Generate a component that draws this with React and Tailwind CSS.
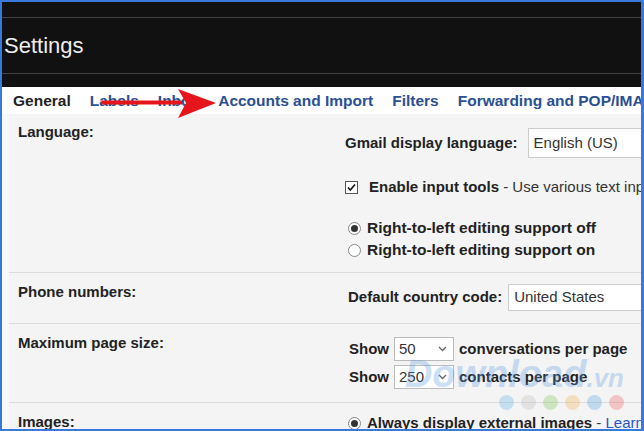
import React from "react";

const font = { fontFamily: '"Liberation Sans", Arial, sans-serif' };

function Checkbox() {
	return (
		<div className="w-[13px] h-[13px] border border-[#555] bg-white flex items-center justify-center">
			<svg width="11" height="11" viewBox="0 0 11 11">
				<path d="M2 5.5 L4.3 8 L9 2.5" fill="none" stroke="#111" strokeWidth="1.6" />
			</svg>
		</div>
	);
}

function Radio({ checked }) {
	return (
		<div className="w-[13px] h-[13px] rounded-full border border-[#888] bg-white flex items-center justify-center shrink-0">
			{checked && <div className="w-[7px] h-[7px] rounded-full bg-[#333]" />}
		</div>
	);
}

function SmallSelect({ value }) {
	return (
		<div className="w-[60px] h-[24px] border border-[#bbb] bg-white flex items-center justify-between pl-[4px] pr-[6px] font-normal text-[15px] text-[#333]">
			<span>{value}</span>
			<svg width="9" height="6" viewBox="0 0 9 6">
				<path d="M1 1 L4.5 4.5 L8 1" fill="none" stroke="#666" strokeWidth="1.3" />
			</svg>
		</div>
	);
}

export default function App() {
	const tabs = ["Labels", "Inbox", "Accounts and Import", "Filters", "Forwarding and POP/IMAP"];

	return (
		<div
			style={font}
			className="relative w-[644px] h-[431px] overflow-hidden border-t-2 border-l-2 border-b-2 border-r-[3px] border-[#3a78dc] bg-white text-[#222] text-[15px]">
			{/* dark header */}
			<div className="bg-[#111]">
				<div className="h-[16px] border-b border-[#444]" />
				<div className="h-[56px] border-b border-[#444] flex items-center pl-[2px]">
					<span className="text-[22px] text-[#eee]">Settings</span>
				</div>
				<div className="h-[13px]" />
			</div>

			{/* tabs */}
			<div className="h-[27px] bg-white flex items-center pl-[11px] gap-[19px] font-bold whitespace-nowrap text-[15.5px]">
				<span className="text-[#222]">General</span>
				{tabs.map((t) => (
					<span key={t} className="text-[#2a4f93]">
						{t}
					</span>
				))}
			</div>

			{/* content */}
			<div className="bg-[#f9f9f9] pl-[7px] font-bold">
				<div className="bg-[#f4f4f4]">
					{/* language */}
					<div className="grid grid-cols-[336px_1fr] h-[159px] border-b border-[#dcdcdc]">
						<div className="pl-[9px] pt-[7px]">Language:</div>
						<div className="pt-[14px] whitespace-nowrap">
							<div className="flex items-center gap-[10px] h-[30px]">
								<span>Gmail display language:</span>
								<div className="h-[30px] w-[200px] bg-white border border-[#ccc] flex items-center pl-[5px] font-normal text-[#333]">
									English (US)
								</div>
							</div>
							<div className="flex items-center gap-[11px] h-[14px] mt-[22px]">
								<Checkbox />
								<span>
									Enable input tools <span className="font-normal text-[#333]">- Use various text input tools</span>
								</span>
							</div>
							<div className="ml-[3px] mt-[23px] flex items-center gap-[6px] h-[22px] text-[15.5px]">
								<Radio checked />
								<span>Right-to-left editing support off</span>
							</div>
							<div className="ml-[3px] flex items-center gap-[6px] h-[22px] text-[15.5px]">
								<Radio />
								<span>Right-to-left editing support on</span>
							</div>
						</div>
					</div>

					{/* phone */}
					<div className="grid grid-cols-[336px_1fr] h-[51px] border-b border-[#dcdcdc]">
						<div className="pl-[9px] pt-[8px]">Phone numbers:</div>
						<div className="pt-[11px] pl-[3px] whitespace-nowrap">
							<div className="flex items-center gap-[6px] h-[27px]">
								<span>Default country code:</span>
								<div className="h-[27px] w-[200px] bg-white border border-[#ccc] flex items-center pl-[5px] font-normal text-[#333]">
									United States
								</div>
							</div>
						</div>
					</div>

					{/* page size */}
					<div className="grid grid-cols-[336px_1fr] h-[79px] border-b border-[#dcdcdc]">
						<div className="pl-[9px] pt-[8px]">Maximum page size:</div>
						<div className="pt-[13px] pl-[4px] whitespace-nowrap">
							<div className="flex items-center gap-[5px] h-[24px]">
								<span>Show</span>
								<SmallSelect value="50" />
								<span>conversations per page</span>
							</div>
							<div className="flex items-center gap-[5px] h-[24px] mt-[4px]">
								<span>Show</span>
								<SmallSelect value="250" />
								<span>contacts per page</span>
							</div>
						</div>
					</div>

					{/* images */}
					<div className="grid grid-cols-[336px_1fr] h-[40px]">
						<div className="pl-[9px] pt-[8px]">Images:</div>
						<div className="pt-[12px] pl-[3px] whitespace-nowrap">
							<div className="flex items-center gap-[6px] h-[16px]">
								<Radio checked />
								<span>
									Always display external images{" "}
									<span className="font-normal text-[#333]">
										- <span className="text-[#2255cc]">Learn more</span>
									</span>
								</span>
							</div>
						</div>
					</div>
				</div>
			</div>

			{/* red arrow annotation */}
			<svg className="absolute left-[98px] top-[85px]" width="122" height="34" viewBox="0 0 122 34">
				<rect x="2" y="13.5" width="80" height="4" fill="#e8141c" />
				<path d="M78 2 L116 16 L78 31 L86 16 Z" fill="#e8141c" />
			</svg>

			{/* watermark */}
			<div className="absolute left-[392px] top-[352px] w-[230px] flex flex-col items-end opacity-30 pointer-events-none">
				<div className="flex items-baseline">
					<span className="text-[38px] leading-[40px] font-bold italic text-[#5a9be0]">Download</span>
					<span className="text-[26px] font-bold italic text-[#5a9be0]">.vn</span>
				</div>
				<div className="flex gap-[7px] -mt-[3px]">
					<div className="w-[15px] h-[15px] rounded-full bg-[#5fb0e8]" />
					<div className="w-[15px] h-[15px] rounded-full bg-[#b9b9b9]" />
					<div className="w-[15px] h-[15px] rounded-full bg-[#7cc24a]" />
					<div className="w-[15px] h-[15px] rounded-full bg-[#f2b24a]" />
					<div className="w-[15px] h-[15px] rounded-full bg-[#4f9ee0]" />
					<div className="w-[15px] h-[15px] rounded-full bg-[#ec5a5a]" />
				</div>
			</div>
		</div>
	);
}
